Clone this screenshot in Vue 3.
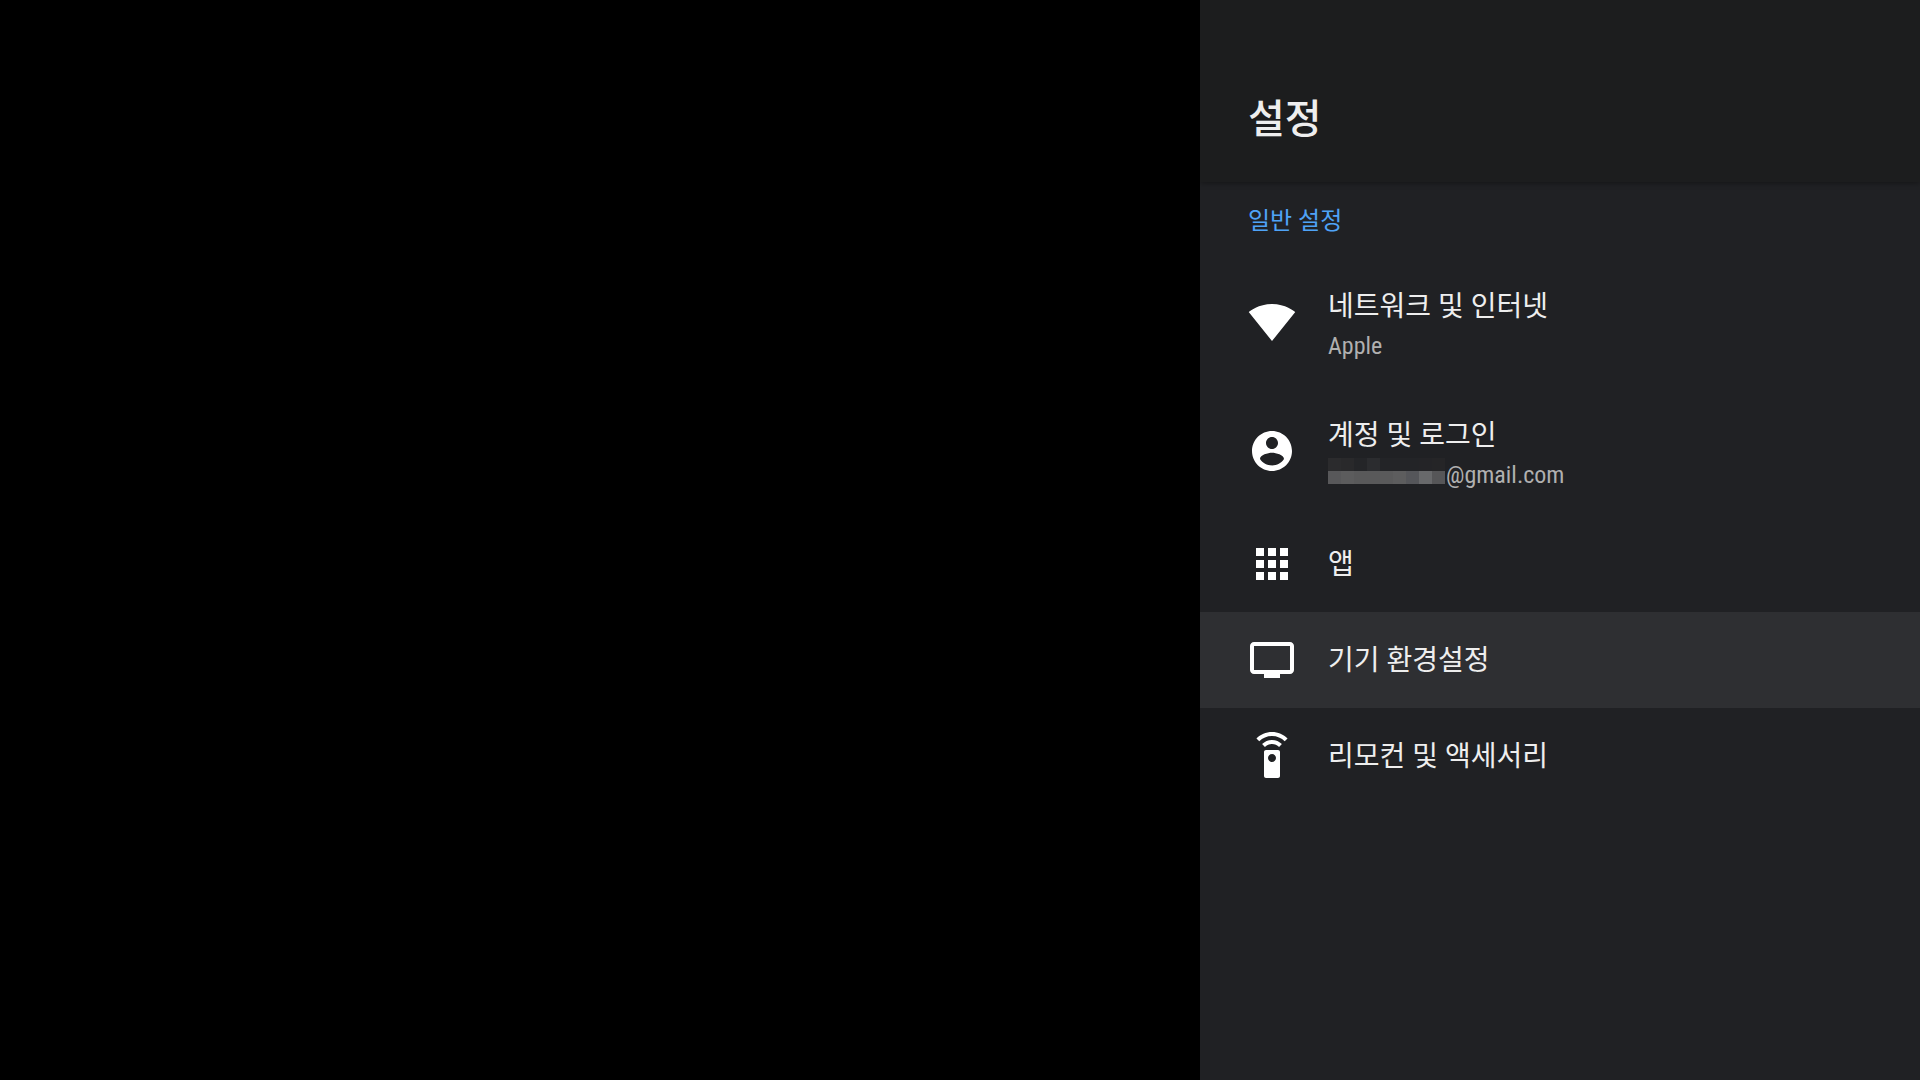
<template>
  <div class="screen">
    <aside class="panel">
      <header class="panel-header">
        <h1>설정</h1>
      </header>
      <nav class="panel-body" aria-labelledby="general">
        <h2 id="general">일반 설정</h2>
        <ul>
          <li v-for="item in items" :key="item.title">
            <button
              type="button"
              class="row"
              :class="{ tall: item.summary, focused: item.title === focused }"
              @focus="focused = item.title"
            >
              <svg class="icon" viewBox="0 0 24 24" aria-hidden="true">
                <path :d="item.icon" />
              </svg>
              <span class="texts">
                <span class="title">{{ item.title }}</span>
                <span v-if="item.summary" class="summary">
                  <span v-if="item.masked" class="mask">
                    <i
                      v-for="(color, i) in maskColors"
                      :key="i"
                      :style="{ background: color }"
                    ></i>
                  </span>
                  <span>{{ item.summary }}</span>
                </span>
              </span>
            </button>
          </li>
        </ul>
      </nav>
    </aside>
  </div>
</template>

<script setup>
import { ref } from "vue";

const focused = ref("기기 환경설정");

// hidden part of the account name, two rows of nine blocks
const maskColors = [
  "#2b2b2d", "#29292b", "#242528", "#2b2c2f", "#232427", "#232427", "#232427", "#242427", "#252527",
  "#58585a", "#5c5c5d", "#59595a", "#59595a", "#5a5a5b", "#5d5d5e", "#55565a", "#68696b", "#565658",
];

const items = [
  {
    title: "네트워크 및 인터넷",
    summary: "Apple",
    icon: "M12.01 21.49L23.64 7c-.45-.34-4.93-4-11.64-4C5.28 3 .81 6.66.36 7l11.63 14.49.01.01.01-.01z",
  },
  {
    title: "계정 및 로그인",
    summary: "@gmail.com",
    masked: true,
    icon: "M12 2C6.48 2 2 6.48 2 12s4.48 10 10 10 10-4.48 10-10S17.52 2 12 2zm0 3c1.66 0 3 1.34 3 3s-1.34 3-3 3-3-1.34-3-3 1.34-3 3-3zm0 14.2c-2.5 0-4.71-1.28-6-3.22.03-1.99 4-3.08 6-3.08 1.99 0 5.97 1.09 6 3.08-1.29 1.94-3.5 3.22-6 3.22z",
  },
  {
    title: "앱",
    icon: "M4 8h4V4H4v4zm6 12h4v-4h-4v4zm-6 0h4v-4H4v4zm0-6h4v-4H4v4zm6 0h4v-4h-4v4zm6-10v4h4V4h-4zm-6 4h4V4h-4v4zm6 6h4v-4h-4v4zm0 6h4v-4h-4v4z",
  },
  {
    title: "기기 환경설정",
    icon: "M21 3H3c-1.1 0-2 .9-2 2v12c0 1.1.9 2 2 2h5v2h8v-2h5c1.1 0 2-.9 2-2V5c0-1.1-.9-2-2-2zm0 14H3V5h18v12z",
  },
  {
    title: "리모컨 및 액세서리",
    icon: "M15 9H9c-.55 0-1 .45-1 1v12c0 .55.45 1 1 1h6c.55 0 1-.45 1-1V10c0-.55-.45-1-1-1zm-3 6c-1.1 0-2-.9-2-2s.9-2 2-2 2 .9 2 2-.9 2-2 2zM7.05 6.05l1.41 1.41C9.37 6.56 10.62 6 12 6s2.63.56 3.54 1.46l1.41-1.41C15.68 4.78 13.93 4 12 4s-3.68.78-4.95 2.05zM12 0C8.96 0 6.21 1.23 4.22 3.22l1.41 1.41C7.26 3.01 9.51 2 12 2s4.74 1.01 6.36 2.64l1.41-1.41C17.79 1.23 15.04 0 12 0z",
  },
];
</script>

<style>
body {
  margin: 0;
  background: #000;
}
</style>

<style scoped>
.screen {
  display: flex;
  justify-content: flex-end;
  min-height: 100vh;
  background: #000;
  font-family: Roboto, "Noto Sans CJK KR", sans-serif;
}

.panel {
  display: flex;
  flex-direction: column;
  width: 37.5%;
  background: #202124;
  color: #eee;
}

.panel-header {
  padding: 89px 48px 31px;
  background: #1c1d1e;
  box-shadow: 0 1px 6px rgba(0, 0, 0, 0.4);
}

h1 {
  margin: 0;
  font-size: 40px;
  font-weight: 500;
  line-height: 62px;
}

h2 {
  margin: 0;
  padding: 21px 48px 19px;
  color: #4fa3f7;
  font-size: 24px;
  font-weight: 400;
  line-height: 36px;
}

ul {
  margin: 0;
  padding: 0;
  list-style: none;
}

.row {
  display: flex;
  align-items: center;
  gap: 32px;
  width: 100%;
  min-height: 96px;
  padding: 0 48px;
  border: 0;
  outline: 0;
  background: transparent;
  color: inherit;
  font: inherit;
  text-align: left;
}

.row.tall {
  min-height: 128px;
  margin-bottom: 1px;
}

.row.focused {
  background: #2e2f32;
}

.icon {
  flex: none;
  width: 48px;
  height: 48px;
  fill: #fff;
}

.texts {
  display: flex;
  flex-direction: column;
  padding-top: 2px;
}

.tall .texts {
  padding-top: 4px;
}

.title {
  font-size: 28px;
  line-height: 44px;
}

.summary {
  display: flex;
  align-items: flex-start;
  gap: 1px;
  color: #b0b0b0;
  font-family: "Roboto Condensed", Roboto, sans-serif;
  font-size: 24px;
  line-height: 34px;
}

.mask {
  display: grid;
  grid-template-columns: repeat(9, 13px);
  grid-auto-rows: 13px;
}
</style>
